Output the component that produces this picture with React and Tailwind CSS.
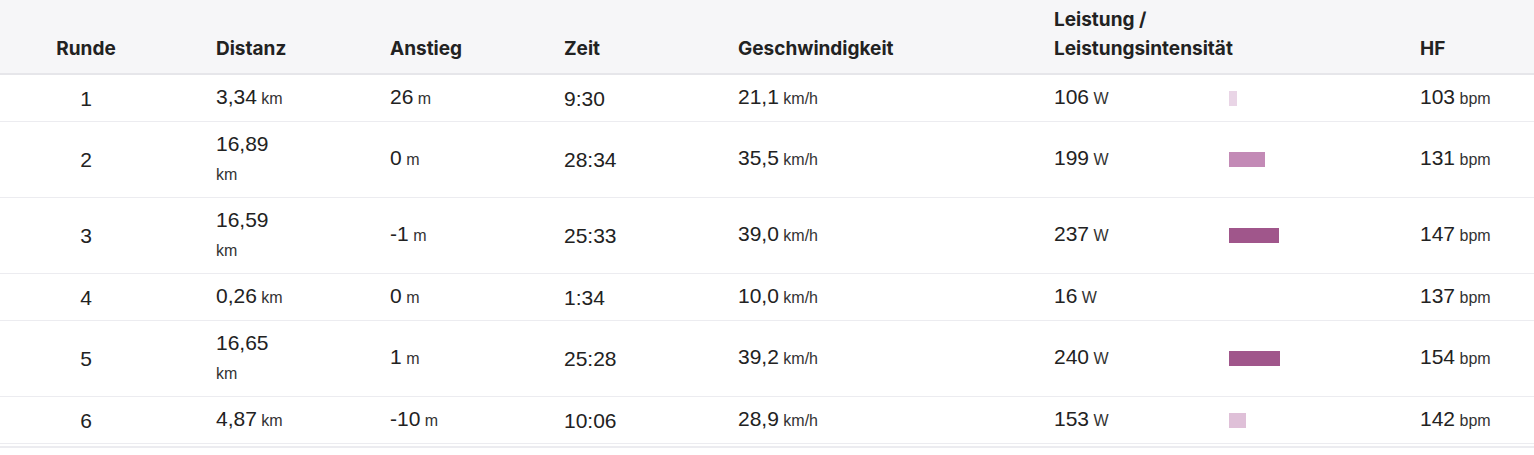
import React from "react";

const cols = "grid grid-cols-[172px_174px_174px_174px_316px_175px_191px_1fr]";

const laps = [
  { n: 1, dist: "3,34", climb: "26", time: "9:30", speed: "21,1", watts: "106", bar: 8, color: "bg-[#e9d5e6]", hr: "103" },
  { n: 2, dist: "16,89", climb: "0", time: "28:34", speed: "35,5", watts: "199", bar: 36, color: "bg-[#c38ab6]", hr: "131" },
  { n: 3, dist: "16,59", climb: "-1", time: "25:33", speed: "39,0", watts: "237", bar: 50, color: "bg-[#a0568b]", hr: "147" },
  { n: 4, dist: "0,26", climb: "0", time: "1:34", speed: "10,0", watts: "16", bar: 0, color: "", hr: "137" },
  { n: 5, dist: "16,65", climb: "1", time: "25:28", speed: "39,2", watts: "240", bar: 51, color: "bg-[#a0568b]", hr: "154" },
  { n: 6, dist: "4,87", climb: "-10", time: "10:06", speed: "28,9", watts: "153", bar: 17, color: "bg-[#dfc0d8]", hr: "142" },
];

function Val({ v, unit }) {
  return (
    <span>
      <span className="text-[21px] leading-none">{v}</span>{" "}
      <span className="text-[16px] leading-none text-[#333]">{unit}</span>
    </span>
  );
}

export default function App() {
  return (
    <div className="w-[1534px] h-[455px] bg-white font-['Liberation_Sans',Arial,sans-serif] text-[#222]">
      <div className="border-b-2 border-[#ececf0] pb-[2px]">
        {/* Header */}
        <div className={`${cols} h-[75px] bg-[#f6f6f8] border-b-2 border-[#e6e6ea] items-end pb-[10px] font-['Inter',sans-serif] font-bold text-[19px] leading-[29px] text-[#222]`}>
          <div className="text-center">Runde</div>
          <div className="pl-[44px]">Distanz</div>
          <div className="pl-[44px]">Anstieg</div>
          <div className="pl-[44px]">Zeit</div>
          <div className="pl-[44px]">Geschwindigkeit</div>
          <div className="col-span-2 pl-[44px]">
            <div className="max-w-[200px]">Leistung / Leistungsintensität</div>
          </div>
          <div className="pl-[44px]">HF</div>
        </div>

        {/* Rows */}
        {laps.map((l) => (
          <div key={l.n} className={`${cols} items-center py-[8.5px] text-[16px] leading-[29px] border-b border-[#ececf0]`}>
            <div className="text-center text-[21px]">{l.n}</div>
            <div className="pl-[44px]">
              <div className="w-[78px]">
                <Val v={l.dist} unit="km" />
              </div>
            </div>
            <div className="pl-[44px]">
              <Val v={l.climb} unit="m" />
            </div>
            <div className="pl-[44px] text-[21px]">{l.time}</div>
            <div className="pl-[44px]">
              <Val v={l.speed} unit="km/h" />
            </div>
            <div className="pl-[44px]">
              <Val v={l.watts} unit="W" />
            </div>
            <div className="pl-[44px] flex items-center">
              {l.bar > 0 && <div className={`h-[15px] ${l.color}`} style={{ width: l.bar }} />}
            </div>
            <div className="pl-[44px]">
              <Val v={l.hr} unit="bpm" />
            </div>
          </div>
        ))}
      </div>
    </div>
  );
}
